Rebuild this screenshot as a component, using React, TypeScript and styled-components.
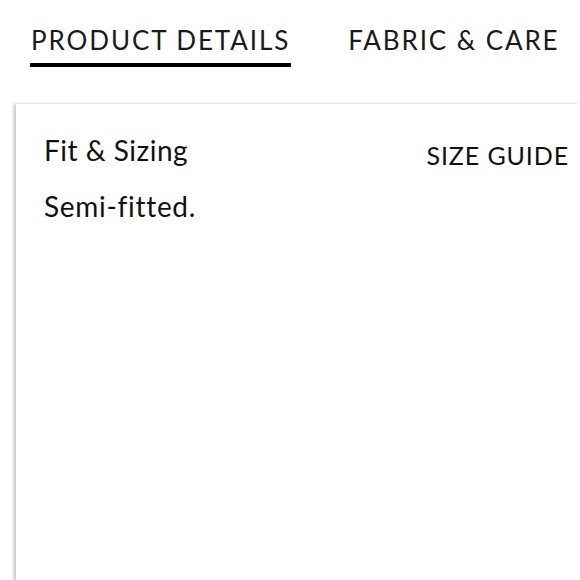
import React from "react";
import styled, { createGlobalStyle } from "styled-components";

const Global = createGlobalStyle`
  html, body { margin: 0; padding: 0; background: #fff; }
  body { font-family: "Lato", "Open Sans", sans-serif; color: #111; overflow: hidden; }
`;

const Page = styled.div`
  width: 580px;
  height: 580px;
  display: flex;
  flex-direction: column;
  overflow: hidden;
`;

const Tabs = styled.div`
  display: flex;
  gap: 56px;
  padding: 25px 0 0 30px;
  height: 78px;
  box-sizing: border-box;
`;

const Tab = styled.div<{ $active?: boolean }>`
  font-size: 26px;
  letter-spacing: 1.9px;
  line-height: 30px;
  padding: 0 1px 4px 1px;
  border-bottom: 4px solid ${(p) => (p.$active ? "#000" : "transparent")};
  height: 34px;
  white-space: nowrap;
  color: #1a1a1a;
`;

const Panel = styled.div`
  margin-left: 16px;
  margin-top: 26px;
  flex: 1;
  background: #fff;
  box-shadow: -3px 0 2px rgba(0, 0, 0, 0.16), 0 -1px 3px rgba(0, 0, 0, 0.06);
  padding: 29px 11px 0 28px;
  display: flex;
  flex-direction: column;
  gap: 22px;
`;

const Row = styled.div`
  display: flex;
  justify-content: space-between;
  align-items: flex-start;
`;

const Heading = styled.div`
  font-size: 28px;
  letter-spacing: 0.5px;
  line-height: 34px;
`;

const Guide = styled.div`
  font-size: 25px;
  letter-spacing: 0.9px;
  line-height: 34px;
  margin-top: 5px;
`;

const Body = styled.div`
  font-size: 28px;
  letter-spacing: 0.7px;
  line-height: 34px;
  margin-top: -5px;
`;

export default function App() {
  return (
    <Page>
      <Global />
      <Tabs>
        <Tab $active>PRODUCT DETAILS</Tab>
        <Tab>FABRIC &amp; CARE</Tab>
      </Tabs>
      <Panel>
        <Row>
          <Heading>Fit &amp; Sizing</Heading>
          <Guide>SIZE GUIDE</Guide>
        </Row>
        <Body>Semi-fitted.</Body>
      </Panel>
    </Page>
  );
}
